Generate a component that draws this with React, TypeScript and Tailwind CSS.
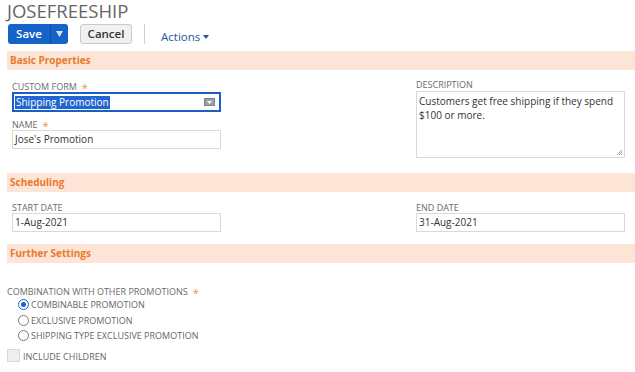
import React from "react";

function Label({ text, required }: { text: string; required?: boolean }) {
  return (
    <div className="h-[12px] flex items-center text-[9px] leading-none text-[#6b6b6b] uppercase whitespace-nowrap">
      {text}
      {required && <span className="ml-[5px] text-[#e39a2a] text-[11px] leading-none mt-[2px]">*</span>}
    </div>
  );
}

function Section({ title }: { title: string }) {
  return (
    <div className="h-[19px] bg-[#fce5d6] flex items-center pl-[3px] text-[10px] font-bold text-[#ea7a2c]">
      {title}
    </div>
  );
}

function Field({ label, value, required }: { label: string; value: string; required?: boolean }) {
  return (
    <div className="w-[209px]">
      <Label text={label} required={required} />
      <div className="h-[19px] border border-[#d9d9d9] flex items-center px-[2px] text-[10px] text-[#333]">
        {value}
      </div>
    </div>
  );
}

function Radio({ label, checked }: { label: string; checked?: boolean }) {
  return (
    <div className="h-[15.5px] flex items-center gap-[2px] text-[9px] text-[#666] uppercase">
      {checked ? (
        <span className="w-[11px] h-[11px] rounded-full border-[1.5px] border-[#1b63c7] flex items-center justify-center">
          <span className="w-[5px] h-[5px] rounded-full bg-[#1b63c7]" />
        </span>
      ) : (
        <span className="w-[11px] h-[11px] rounded-full border-[1.5px] border-[#7a7a80]" />
      )}
      {label}
    </div>
  );
}

export default function App() {
  return (
    <div className="w-[635px] h-[372px] overflow-hidden bg-white font-['Open_Sans',sans-serif] pl-[7px]">
      {/* Title */}
      <div className="h-[22px] text-[18.5px] leading-[22px] text-[#666]">JOSEFREESHIP</div>

      {/* Buttons */}
      <div className="mt-[2px] h-[20px] flex items-center">
        <div className="ml-px h-[20px] w-[60px] flex rounded-[3px] bg-[#1563c8] text-white">
          <span className="w-[42px] flex items-center justify-center text-[11.5px] font-semibold">Save</span>
          <span className="w-px bg-[#0f4fa3]" />
          <span className="flex-1 flex items-center justify-center">
            <svg width="7" height="6" viewBox="0 0 7 6"><path d="M0 0h7L3.5 6z" fill="#d9e4f5" /></svg>
          </span>
        </div>
        <div className="ml-[12px] h-[20px] w-[52px] flex items-center justify-center rounded-[3px] border border-[#c9c9c9] bg-[#f1f1f1] text-[11.5px] font-semibold text-[#333]">
          Cancel
        </div>
        <span className="ml-[12px] w-px h-[20px] bg-[#cfcfcf]" />
        <div className="ml-[16px] mt-[5px] flex items-center gap-[3px] text-[11.5px] text-[#24569a]">
          Actions
          <svg width="6" height="4" viewBox="0 0 6 4"><path d="M0 0h6L3 4z" fill="#24569a" /></svg>
        </div>
      </div>

      {/* Basic Properties */}
      <div className="mt-[7px]">
        <Section title="Basic Properties" />
      </div>
      <div className="mt-[8px] pl-[5px] flex items-start">
        <div className="w-[209px] mt-[2px]">
          <Label text="Custom Form" required />
          <div className="h-[20px] border-2 border-[#1b5fc4] flex items-center justify-between pl-px pr-[4px]">
            <span className="bg-[#2166d0] text-white text-[10px] leading-[13px] px-px">Shipping Promotion</span>
            <svg width="11" height="8" viewBox="0 0 11 8">
              <rect x="0.5" y="0.5" width="10" height="7" fill="#9aa0a8" stroke="#7d838b" />
              <path d="M3 3h5L5.5 6z" fill="#fff" />
            </svg>
          </div>
          <div className="mt-[6px]">
            <Field label="Name" value="Jose's Promotion" required />
          </div>
        </div>
        <div className="ml-[195px] w-[209px]">
          <Label text="Description" />
          <div className="mt-px h-[67px] border border-[#d9d9d9] relative px-[2px] pt-[2px] text-[10px] leading-[14px] text-[#333]">
            Customers get free shipping if they spend $100 or more.
            <svg className="absolute right-px bottom-px" width="7" height="7" viewBox="0 0 7 7">
              <path d="M6 1L1 6M6 3L3 6M6 5L5 6" stroke="#999" strokeWidth="1" />
            </svg>
          </div>
        </div>
      </div>

      {/* Scheduling */}
      <div className="mt-[15px]">
        <Section title="Scheduling" />
      </div>
      <div className="mt-[9px] pl-[5px] flex">
        <Field label="Start Date" value="1-Aug-2021" />
        <div className="ml-[195px]">
          <Field label="End Date" value="31-Aug-2021" />
        </div>
      </div>

      {/* Further Settings */}
      <div className="mt-[12px]">
        <Section title="Further Settings" />
      </div>
      <div className="mt-[22px]">
        <Label text="Combination with other promotions" required />
        <div className="pl-[11px]">
          <Radio label="Combinable Promotion" checked />
          <Radio label="Exclusive Promotion" />
          <Radio label="Shipping Type Exclusive Promotion" />
        </div>
        <div className="mt-[5px] flex items-end">
          <span className="w-[13px] h-[13px] border border-[#d8d8d8] bg-[#eee]" />
          <span className="ml-[3px] -mb-[2px] text-[9px] text-[#666]">INCLUDE CHILDREN</span>
        </div>
      </div>
    </div>
  );
}
